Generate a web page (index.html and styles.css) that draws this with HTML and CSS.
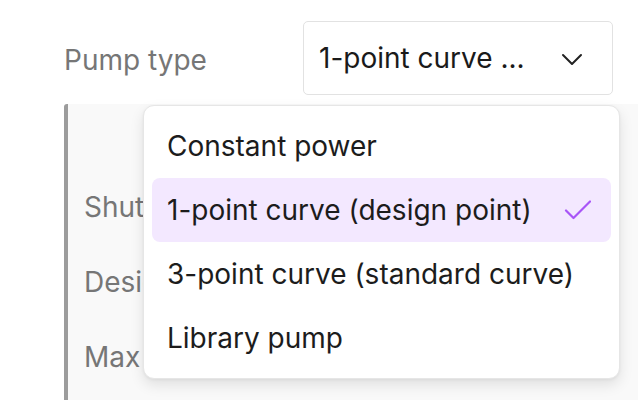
FILE: index.html
```html
<!DOCTYPE html>
<html lang="en">
<head>
<meta charset="utf-8">
<title>Pump type</title>
<link rel="stylesheet" href="styles.css">
</head>
<body>
<div class="page">
  <div class="field-row">
    <span class="field-label">Pump type</span>
    <button class="select" type="button">
      <span class="select-value">1-point curve ...</span>
      <svg class="chevron" width="22" height="14" viewBox="0 0 22 14" aria-hidden="true">
        <polyline points="2,3 11,12 20,3" fill="none" stroke="#222" stroke-width="2" stroke-linecap="round" stroke-linejoin="round"/>
      </svg>
    </button>
  </div>
  <div class="panel">
    <div class="panel-row">Shutoff head</div>
    <div class="panel-row">Design flow</div>
    <div class="panel-row">Max flow</div>
  </div>
  <ul class="menu" role="listbox">
    <li class="menu-item">Constant power</li>
    <li class="menu-item selected">
      <span>1-point curve (design point)</span>
      <svg class="check" width="28" height="20" viewBox="0 0 28 20" aria-hidden="true">
        <polyline points="3,10.5 10.5,18 27,1.5" fill="none" stroke="#a855f7" stroke-width="2.2" stroke-linecap="round" stroke-linejoin="round"/>
      </svg>
    </li>
    <li class="menu-item">3-point curve (standard curve)</li>
    <li class="menu-item">Library pump</li>
  </ul>
</div>
</body>
</html>
```
FILE: styles.css
```css
html, body {
  margin: 0;
  padding: 0;
  background: #ffffff;
}

body {
  font-family: Inter, "Noto Sans", sans-serif;
  font-size: 28px;
  color: #1c1c1c;
  overflow: hidden;
}

.page {
  position: relative;
  width: 638px;
  height: 400px;
  padding-top: 21px;
  box-sizing: border-box;
  overflow: hidden;
}

.field-row {
  display: flex;
  align-items: center;
  padding-left: 64px;
}

.field-label {
  width: 239px;
  color: #767676;
  padding-top: 4px;
}

.select {
  width: 310px;
  height: 74px;
  box-sizing: border-box;
  display: flex;
  align-items: center;
  justify-content: space-between;
  padding: 0 29px 0 15px;
  background: #ffffff;
  border: 1.5px solid #e2e2e2;
  border-radius: 5px;
  font: inherit;
  color: #1a1a1a;
}

.chevron {
  display: block;
  margin-top: 1px;
}

.panel {
  margin-top: 9px;
  margin-left: 64px;
  height: 296px;
  box-sizing: border-box;
  border-left: 4px solid #9c9c9c;
  border-top-left-radius: 3px;
  background: #f9f9f9;
  padding-left: 16px;
  padding-top: 87px;
  display: flex;
  flex-direction: column;
  gap: 43px;
  color: #767676;
  white-space: nowrap;
}

.panel-row {
  line-height: 32px;
}

.menu {
  position: absolute;
  left: 143px;
  top: 105px;
  width: 477px;
  box-sizing: border-box;
  margin: 0;
  padding: 8px;
  list-style: none;
  background: #ffffff;
  border: 1px solid #e6e6e6;
  border-radius: 11px;
  box-shadow: 0 6px 14px rgba(0, 0, 0, 0.10), 0 1px 3px rgba(0, 0, 0, 0.05);
}

.menu-item {
  height: 64px;
  display: flex;
  align-items: center;
  justify-content: space-between;
  padding: 0 20px 0 15px;
  border-radius: 8px;
  color: #1c1c1c;
}

.menu-item.selected {
  background: #f3e8ff;
}

.check {
  display: block;
}
```
